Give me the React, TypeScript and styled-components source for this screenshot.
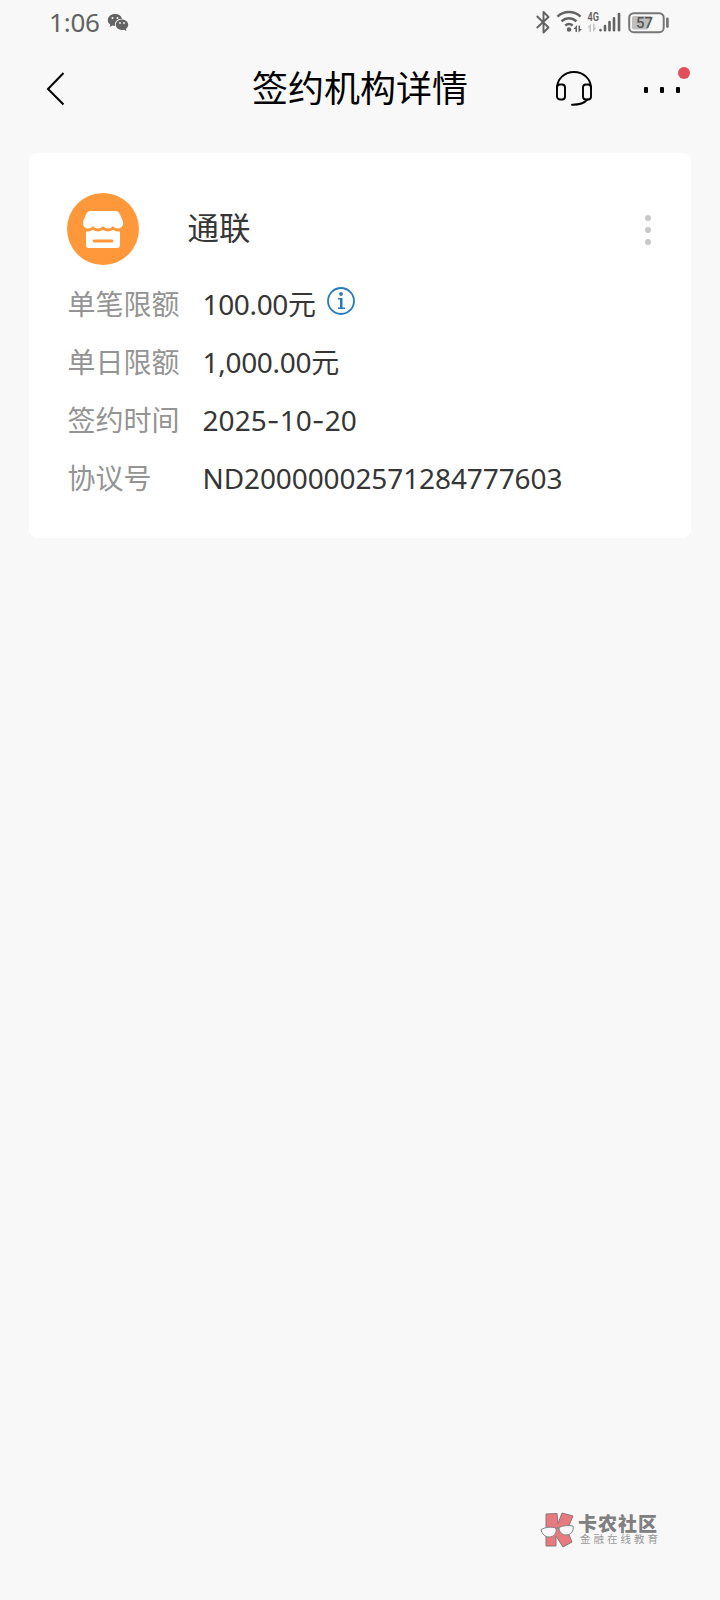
import React from "react";
import styled, { createGlobalStyle } from "styled-components";

const GlobalStyle = createGlobalStyle`
  * { box-sizing: border-box; }
  body {
    margin: 0;
    background: #f8f8f8;
    font-family: "Noto Sans", "Noto Sans CJK SC", sans-serif;
  }
`;

const Screen = styled.div`
  display: flex;
  flex-direction: column;
  width: 720px;
  height: 1600px;
  background: #f8f8f8;
`;

const StatusBar = styled.header`
  display: flex;
  align-items: center;
  justify-content: space-between;
  height: 45px;
  padding: 0 49px 1px 49px;
  color: #636363;
`;

const StatusLeft = styled.div`
  display: flex;
  align-items: center;
  gap: 7px;
`;

const Clock = styled.span`
  font-size: 26px;
  line-height: 44px;
  letter-spacing: -0.2px;
`;

const StatusIcons = styled.svg`
  display: block;
`;

const NavBar = styled.nav`
  display: grid;
  grid-template-columns: 226px 1fr 226px;
  align-items: center;
  height: 88px;
  color: #000;
`;

const BackButton = styled.button`
  display: flex;
  margin-left: 44px;
  padding: 0;
  border: 0;
  background: none;
  color: inherit;
`;

const Title = styled.h1`
  margin: 0;
  padding-bottom: 5px;
  text-align: center;
  font-size: 36px;
  font-weight: 400;
  line-height: 83px;
  font-family: "Noto Sans CJK SC", sans-serif;
`;

const NavActions = styled.div`
  display: flex;
  justify-content: flex-end;
  align-items: center;
  gap: 52px;
  padding-right: 30px;
`;

const ActionButton = styled.button`
  display: flex;
  padding: 0;
  border: 0;
  background: none;
  color: inherit;
`;

const Card = styled.main`
  margin: 20px 29px 0;
  height: 385px;
  padding: 40px 38px 0;
  border-radius: 8px;
  background: #fff;
`;

const Merchant = styled.div`
  display: flex;
  align-items: center;
  height: 72px;
  margin-bottom: 10px;
`;

const MerchantName = styled.h2`
  flex: 1;
  margin: 0 0 0 48.5px;
  padding-bottom: 6px;
  font-family: "Noto Sans CJK SC", sans-serif;
  font-size: 31.5px;
  font-weight: 400;
  line-height: 66px;
  color: #363636;
`;

const MoreButton = styled.button`
  display: flex;
  flex-direction: column;
  gap: 6px;
  margin: 2px 2px 0 0;
  padding: 0;
  border: 0;
  background: none;
`;

const MoreDot = styled.i`
  width: 6px;
  height: 6px;
  border-radius: 50%;
  background: #c8c8c8;
`;

const Details = styled.dl`
  margin: 0;
`;

const DetailRow = styled.div`
  display: flex;
  align-items: center;
  height: 58px;
  font-size: 28px;
  line-height: 58px;
`;

const Label = styled.dt`
  width: 136px;
  padding: 0 0 2px 0.5px;
  line-height: 56px;
  color: #949494;
  font-family: "Noto Sans CJK SC", sans-serif;
`;

const Value = styled.dd<{ $tracking: string }>`
  display: flex;
  align-items: center;
  margin: 0 0 0 -0.5px;
  letter-spacing: ${({ $tracking }) => $tracking};
  color: #363636;
`;

const Hyphen = styled.span`
  font-family: Inter, sans-serif;
`;

const InfoIcon = styled.svg`
  margin: -6px 0 0 10px;
`;

const Watermark = styled.footer`
  display: flex;
  align-items: center;
  gap: 3px;
  margin: auto 62px 51px auto;
  color: #808080;
  font-family: "Noto Sans CJK SC", sans-serif;
`;

const WatermarkText = styled.div`
  display: flex;
  flex-direction: column;
  width: 80px;
  padding-bottom: 3px;
  white-space: nowrap;
`;

const Community = styled.strong`
  font-size: 19px;
  font-weight: 900;
  line-height: 19px;
  letter-spacing: 1px;
`;

const Tagline = styled.span`
  padding-left: 2px;
  font-size: 10.5px;
  line-height: 14px;
  letter-spacing: 3px;
  color: #999;
`;

const ChatIcon = () => (
  <svg width="22" height="19" viewBox="0 0 22 19">
    <path fill="#636363" d="M8 1C3.800 1 .8 3.700.8 7c0 2 1 3.500 2.500 4.600L2.700 14l2.700-1.400c1 .3 1.800.4 2.800.4-1.200-4 2-7.400 6.900-7.300C14.300 3 11.600 1 8 1Z" />
    <path fill="#636363" d="M15 6.600c-3.500 0-6.200 2.300-6.200 5.200s2.700 5.200 6.200 5.200c.8 0 1.500-.1 2.200-.3l2.300 1.300-.6-2c1.400-1 2.300-2.500 2.300-4.200 0-2.900-2.700-5.200-6.200-5.200Z" />
    <g fill="#f8f8f8">
      <circle cx="5.500" cy="5" r="1" /><circle cx="10.500" cy="5" r="1" />
      <circle cx="13" cy="10" r=".9" /><circle cx="17" cy="10" r=".9" />
    </g>
  </svg>
);

const DeviceIcons = () => (
  <StatusIcons width="136" height="28" viewBox="0 0 136 28" fill="none">
    <path d="M2.300 8.500 13.500 19.500 8.500 24.500V4L13.500 9 2.300 19.500" stroke="#636363" strokeWidth="1.900" strokeLinejoin="round" strokeLinecap="round" />
    <g stroke="#636363" strokeWidth="2.500">
      <path d="M22.500 8.600c6.500-6 16.500-6 23 0" />
      <path d="M26.500 13.200c4.500-3.900 10.500-3.900 15 0" />
      <path d="M30.300 17.500c2.300-1.900 5.100-1.900 7.400 0" />
    </g>
    <circle cx="34" cy="21.500" r="2.200" fill="#636363" />
    <path d="m38.500 21 3.500-4v7h-1.500v-3Zm8.500 0-3.500 3.500v-7H45V21Z" fill="#636363" />
    <text x="52.500" y="13" fill="#636363" fontFamily="Roboto, sans-serif" fontWeight="600" fontSize="12.500" textLength="11.500" lengthAdjust="spacingAndGlyphs">4G</text>
    <path d="m52.500 19.500 3.500-4V24h-1.600v-4.500Zm9 0L58 24v-8.500h1.500v4Z" fill="#c5c5c5" />
    <g stroke="#636363" strokeWidth="2.600" strokeLinecap="round">
      <path d="M65.500 22v.3M70 18v4.300M74.500 14v8.300M79 10.200v12.100M84 6v16.300" />
    </g>
    <rect x="94.200" y="5.200" width="34.500" height="19" rx="4.500" stroke="#777" strokeWidth="2" />
    <path d="M99 8h17.500l-4 13.500H99a2 2 0 0 1-2-2V10a2 2 0 0 1 2-2Z" fill="#bdbdbd" />
    <text x="101" y="20" fill="#555" fontFamily="Roboto, sans-serif" fontWeight="500" fontSize="15.500" textLength="17" lengthAdjust="spacingAndGlyphs">57</text>
    <rect x="131" y="9.500" width="2.800" height="10.500" rx="1.400" fill="#777" />
  </StatusIcons>
);

const HeadsetIcon = () => (
  <svg width="36" height="36" viewBox="0 0 36 36" fill="none" stroke="currentColor" strokeWidth="1.900" strokeLinecap="round">
    <path d="M1 17.500C1 8 8.500 1 18 1s17 7 17 16.500" />
    <rect x="1" y="13.500" width="8" height="15" rx="3" />
    <rect x="27" y="13.500" width="8" height="15" rx="3" />
    <path d="M31.500 28.500c-4 4.500-8.500 5.300-15.500 5.200" />
  </svg>
);

const MenuIcon = () => (
  <svg width="46" height="44" viewBox="0 0 46 44">
    <circle cx="40" cy="6" r="6" fill="#e24e59" />
    <g fill="#000">
      <rect x="0" y="20" width="4" height="6" rx="1" />
      <rect x="16" y="20" width="4" height="6" rx="1" />
      <rect x="32" y="20" width="4" height="6" rx="1" />
    </g>
  </svg>
);

const StoreIcon = () => (
  <svg width="72" height="72" viewBox="0 0 72 72">
    <circle cx="36" cy="36" r="36" fill="#ff983b" />
    <path fill="#fff" d="M24 18h24c2.400 0 3.900 1.100 4.900 3.300l2.500 5.700c2 4.500-.4 8.500-4.400 8.500-2.500 0-4.200-1.300-5-2.500-1.100 1.500-2.700 2.500-4.800 2.500-2.400 0-4.200-1.200-5.200-2.500-1 1.300-2.800 2.500-5.200 2.500-2.100 0-3.700-1-4.800-2.500-.8 1.200-2.500 2.500-5 2.500-4 0-5.900-4-4.400-8.500l2.500-5.700C20.100 19.100 21.600 18 24 18Z" />
    <path fill="#fff" d="M19 38.500c2.700.2 5-.4 7-1.800 3 2.300 7 2.300 10 0 3 2.300 7 2.300 10 0 2 1.400 4.300 2 7 1.800V52c0 2-1 3-3 3H22c-2 0-3-1-3-3Z" />
    <path d="M27 48h18" stroke="#ff983b" strokeWidth="2.800" strokeLinecap="round" />
  </svg>
);

const CommunityLogo = () => (
  <svg width="35" height="37" viewBox="0 0 35 37">
    <path d="m6 2 11-.5 1 10L22 1l11 3-6 14 5 12-9 5-7-11v10H6Z" fill="#e8797f" stroke="#8a7777" strokeWidth="1" />
    <g fill="#f8f8f8" stroke="#858585" strokeWidth="1">
      <path d="M1 17.500c5-2.500 10-3 15-1.500 1 5-2 9-7 9-4 0-7-3-8-7.500Z" />
      <path d="M19 15.500c4-2 10-2.500 14-1.500 1 5-2 9-7 9-4 0-7-3-7-7.500Z" />
    </g>
    <path d="M15.500 17c1-1.500 2.500-1.500 3.500-.5" fill="none" stroke="#858585" strokeWidth="1.200" />
  </svg>
);

const details = [
  { label: "单笔限额", value: "100.00元", tracking: "-0.35px", info: true },
  { label: "单日限额", value: "1,000.00元", tracking: "-0.3px" },
  { label: "签约时间", value: "2025-10-20", tracking: "0.05px" },
  { label: "协议号", value: "ND20000002571284777603", tracking: "-0.1px" },
];

const renderValue = (value: string) =>
  value.split("-").map((part, i) => (
    <React.Fragment key={i}>
      {i > 0 && <Hyphen>-</Hyphen>}
      {part}
    </React.Fragment>
  ));

export default function App() {
  return (
    <Screen>
      <GlobalStyle />
      <StatusBar>
        <StatusLeft>
          <Clock>1:06</Clock>
          <ChatIcon />
        </StatusLeft>
        <DeviceIcons />
      </StatusBar>
      <NavBar>
        <BackButton aria-label="返回">
          <svg width="24" height="36" viewBox="0 0 24 36" fill="none" stroke="currentColor" strokeWidth="2">
            <path d="M19.500 2 4 18l15.500 15.500" />
          </svg>
        </BackButton>
        <Title>签约机构详情</Title>
        <NavActions>
          <ActionButton aria-label="客服"><HeadsetIcon /></ActionButton>
          <ActionButton aria-label="更多"><MenuIcon /></ActionButton>
        </NavActions>
      </NavBar>
      <Card>
        <Merchant>
          <StoreIcon />
          <MerchantName>通联</MerchantName>
          <MoreButton aria-label="操作">
            <MoreDot /><MoreDot /><MoreDot />
          </MoreButton>
        </Merchant>
        <Details>
          {details.map(({ label, value, tracking, info }) => (
            <DetailRow key={label}>
              <Label>{label}</Label>
              <Value $tracking={tracking}>
                <span>{renderValue(value)}</span>
                {info && (
                  <InfoIcon width="30" height="30" viewBox="0 0 30 30">
                    <circle cx="15" cy="15" r="13" fill="none" stroke="#267bbd" strokeWidth="1.800" />
                    <circle cx="15" cy="8" r="1.900" fill="#267bbd" />
                    <path d="M12 12h4.500v9.500H19V23h-7v-1.500h2v-8h-2Z" fill="#267bbd" />
                  </InfoIcon>
                )}
              </Value>
            </DetailRow>
          ))}
        </Details>
      </Card>
      <Watermark>
        <CommunityLogo />
        <WatermarkText>
          <Community>卡农社区</Community>
          <Tagline>金融在线教育</Tagline>
        </WatermarkText>
      </Watermark>
    </Screen>
  );
}
